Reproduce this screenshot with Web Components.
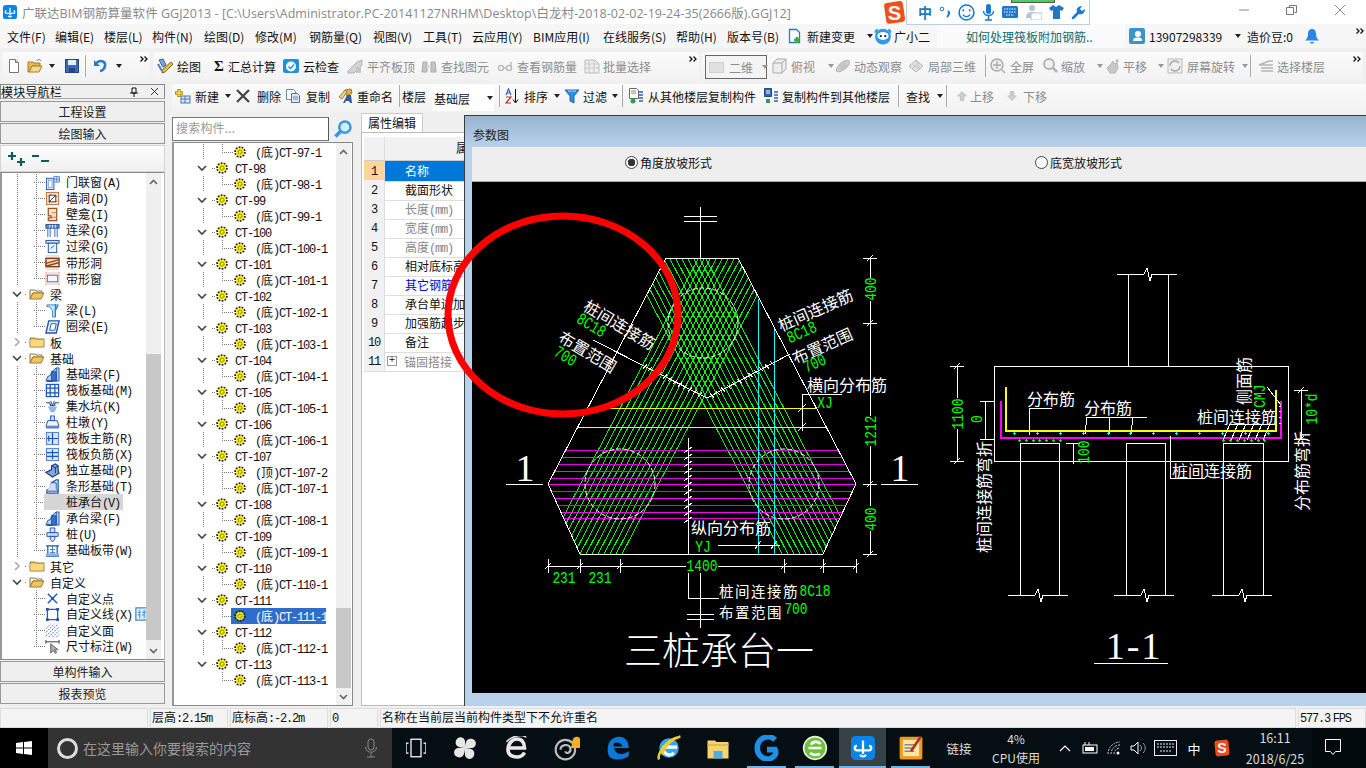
<!DOCTYPE html>
<html lang="zh">
<head>
<meta charset="utf-8">
<title>GGJ2013</title>
<style>
  html, body { margin: 0; height: 768px; overflow: hidden; background: #f0f0f0; }
  body { font: 12px "Noto Sans CJK SC", "Noto Sans", sans-serif; color: #111; }
</style>
</head>
<body>
<gd-app></gd-app>
<script>
// Shared bits -----------------------------------------------------------
const BASE = `
  *{box-sizing:border-box}
  .a{font-family:"Liberation Mono",monospace;font-size:12px;letter-spacing:-1.2px}
  svg{display:block;flex:none}
`;
// latin in the old GDI font is 6px wide next to 12px cjk
const mix = t => t.replace(/[\x21-\x7e]+/g, m => `<span class="a">${m}</span>`);
const ico = (b, s = 16) => `<svg width="${s}" height="${s}" viewBox="0 0 16 16">${b}</svg>`;

const ICONS = {
  app: `<rect x="0" y="0" width="16" height="16" rx="3" fill="#0a84e8"/><path d="M8 3v9M4 6.500c-2 0-2 3 0 3h8c2 0 2-3 0-3M6 12.500c1 1.500 3 1.500 4 0" fill="none" stroke="#fff" stroke-width="1.500"/>`,
  doc: `<path d="M3.500 1.500h6l3 3v10h-9z" fill="#fff" stroke="#777"/><path d="M9.500 1.500v3h3" fill="#ddd" stroke="#777"/>`,
  open: `<path d="M1 14V4h5l1 1h6v3H5L2 14z" fill="#e8b850" stroke="#a87c28"/><path d="M2 14l3-6h10l-3 6z" fill="#f7d98a" stroke="#a87c28"/><path d="M10 3c1-2 3-2 4 0" fill="none" stroke="#3a6ea8"/>`,
  save: `<rect x="1.500" y="1.500" width="13" height="13" fill="#3c68b8" stroke="#23427e"/><rect x="4" y="2" width="8" height="5" fill="#e8eef8"/><rect x="5" y="10" width="6" height="4" fill="#27457f"/>`,
  undo: `<path d="M3 6c3-5 10-3 9 2-.5 3-3 5-5 5" fill="none" stroke="#2f78c8" stroke-width="2.600"/><path d="M1 2v6h6z" fill="#2f78c8"/>`,
  draw: `<path d="M2 2l4-1 3 6-3 2z" fill="#7aa6d8" stroke="#34609c"/><path d="M6 11L14 4l2 2-8 8-3 1z" fill="#e8c040" stroke="#8c6a18"/><path d="M1 6l4 7" stroke="#4f7fb8" stroke-width="2"/>`,
  sigma: `<text x="8" y="13" text-anchor="middle" font-family="Liberation Serif" font-weight="700" font-size="15" fill="#111">Σ</text>`,
  cloud: `<rect x="0" y="1" width="16" height="14" rx="2" fill="#1e90e0"/><circle cx="8" cy="8.500" r="5" fill="#fff"/><path d="M5.500 8.500l2 2 3.500-4" fill="none" stroke="#1e90e0" stroke-width="1.400"/>`,
  align: `<path d="M1 13l9-9 5-2v5l-8 8H1z" fill="#d4d4d4" stroke="#b0b0b0"/><path d="M9 9h5v6H9z" fill="#c4c4c4"/>`,
  bino: `<path d="M2 4h4v10H1zM10 4h4l1 10h-5z" fill="#c4c4c4" stroke="#aaa"/><path d="M6 7h4v3H6z" fill="#ddd"/>`,
  glass: `<circle cx="4" cy="10" r="2.500" fill="none" stroke="#bdbdbd" stroke-width="1.500"/><circle cx="12" cy="10" r="2.500" fill="none" stroke="#bdbdbd" stroke-width="1.500"/><path d="M6.500 10h3M14 9V4" stroke="#bdbdbd" stroke-width="1.400"/>`,
  batch: `<path d="M1 2h10l4 4v9H1z" fill="#eee" stroke="#bbb"/><path d="M1 6h14M1 10h14M5 2v13M10 2v13" stroke="#c8c8c8"/>`,
  box: `<path d="M2 5l4-4h9v10l-4 4H2z" fill="#eee" stroke="#aaa"/><path d="M2 5h9v10M11 5l4-4" fill="none" stroke="#aaa"/>`,
  orbit: `<ellipse cx="8" cy="8" rx="8" ry="3.500" transform="rotate(-40 8 8)" fill="#d0d0d0" stroke="#b5b5b5"/><circle cx="8" cy="8" r="4" fill="#c4c4c4"/>`,
  cube3: `<path d="M1 8l7-6 7 6-7 6z" fill="#e2e2e2" stroke="#b8b8b8"/><path d="M4 5.500l7 6M8 2l4 10M4 11l7-6" stroke="#c2c2c2" fill="none"/>`,
  zoomfull: `<circle cx="7" cy="7" r="6" fill="#eee" stroke="#aaa" stroke-width="1.500"/><path d="M7 3v8M3 7h8M12 12l3 3" stroke="#aaa" stroke-width="1.300"/>`,
  zoom: `<circle cx="7" cy="6" r="5" fill="#f0f0f0" stroke="#b4b4b4" stroke-width="2"/><path d="M11 10l4 4" stroke="#b4b4b4" stroke-width="2.500"/>`,
  hand: `<path d="M2 10l4-4 2-3 1 3 3-1 1 5-3 5H5z" fill="#c8c8c8" stroke="#b4b4b4"/><path d="M12 1v4M10 3h4" stroke="#b0b0b0"/>`,
  rotate: `<rect x="1" y="1" width="14" height="14" fill="#eee" stroke="#bbb"/><path d="M3 8a5 5 0 0 1 9-3M13 8a5 5 0 0 1-9 3" fill="none" stroke="#aaa" stroke-width="1.500"/>`,
  layers: `<path d="M1 7l10-4h4M1 7h14M3 10h12M3 13h12" fill="none" stroke="#b4b4b4" stroke-width="1.500"/>`,
  newrow: `<rect x="6" y="8" width="9" height="7" fill="#dce8f6" stroke="#4c76a8"/><path d="M6 11h9M10 8v7" stroke="#4c76a8"/><path d="M4 1v8M0 5h8" stroke="#b89018" stroke-width="3.400"/><path d="M4 2v6M1 5h6" stroke="#f4d850" stroke-width="1.600"/>`,
  del: `<path d="M2 2l12 12M14 2L2 14" stroke="#444" stroke-width="2.200"/>`,
  copy: `<path d="M1.500 1.500h7l2 2v8h-9z" fill="#fff" stroke="#7088a8"/><path d="M6.500 5.500h6l2 2v7h-8z" fill="#dce8f6" stroke="#4c76a8"/><path d="M8 9h5M8 11h5" stroke="#6f8cb4"/>`,
  rename: `<path d="M8 2l6-1 1 4-5 3z" fill="#e0b040" stroke="#9c7820"/><path d="M2 9l6-7 2 2-5 7z" fill="#e8d088" stroke="#998044"/><path d="M10 7l4 0 1 8h-2l-1-2h-3l-1 2H6z" fill="#345c9c"/>`,
  sort: `<path d="M11.500 1v13" stroke="#111"/><path d="M9 11.500l2.500 3.500 2.500-3.500" fill="none" stroke="#111"/><path d="M2 7l2.500-6L7 7M3 5h3" fill="none" stroke="#2f62b4" stroke-width="1.200"/><path d="M2 9h5l-5 6h5" fill="none" stroke="#b4322c" stroke-width="1.200"/>`,
  funnel: `<path d="M1 2h14L10 8v7l-4-2V8z" fill="#2f8ce0" stroke="#1c68b0"/><path d="M4 3h8" stroke="#a8d4f8"/>`,
  cfrom: `<path d="M1.500.5h7l2 2v8h-9z" fill="#fff" stroke="#666"/><path d="M3 3h5M3 5h5" stroke="#888"/><circle cx="5" cy="13" r="2.500" fill="#2ea04a"/><path d="M11 4h4M11 7h4M11 10h4M11 13h4" stroke="#2f62b4" stroke-width="1.600"/>`,
  cto: `<path d="M1.500.5h7v8h-7z" fill="#3465b0" stroke="#234a88"/><path d="M3 3h4M3 5h4" stroke="#fff"/><path d="M3 11h4v4H3z" fill="#2ea04a"/><path d="M11 4h4M11 7h4M11 10h4M11 13h4" stroke="#2f62b4" stroke-width="1.600"/>`,
  up: `<path d="M8 3l5 5h-3v5H6V8H3z" fill="#ccc" stroke="#c0c0c0"/>`,
  down: `<path d="M8 13l5-5h-3V3H6v5H3z" fill="#ccc" stroke="#c0c0c0"/>`,
  newchange: `<path d="M2.500 1.500h7l3 3v10h-10z" fill="#fff" stroke="#2f78c8" stroke-width="1.300"/><path d="M7 12h6M10 9v6" stroke="#3aa83e" stroke-width="2.600"/>`,
  robot: `<circle cx="8" cy="8.500" r="7" fill="#2f9ae8"/><path d="M1 5L3 2M15 5l-2-3" stroke="#2f9ae8" stroke-width="2"/><ellipse cx="8" cy="8" rx="5" ry="3.500" fill="#fff"/><circle cx="6" cy="8" r="1" fill="#123"/><circle cx="10" cy="8" r="1" fill="#123"/>`,
  user: `<rect width="16" height="16" rx="2" fill="#3b94c8"/><circle cx="9" cy="6" r="3" fill="#fff"/><path d="M4 13c0-3 2-3.500 5-3.500s4 .5 4 3.500z" fill="#fff"/>`,
  bell: `<path d="M8 1c3 0 4 2.500 4 5 0 3 1 5 3 6.500H1C3 11 4 9 4 6c0-2.500 1-5 4-5z" fill="#2c84e8"/><path d="M6 14c.5 1.500 3.500 1.500 4 0" fill="#2c84e8" stroke="#2c84e8"/>`,
  magnify: `<circle cx="9.500" cy="6.500" r="4.500" fill="#d6ecfb" stroke="#3a98e0" stroke-width="2"/><path d="M6 10l-4 4" stroke="#3a98e0" stroke-width="3"/>`,
  // tree icons
  fclosed: `<path d="M1 13V4h5l1 1h8v8z" fill="#f0c040" stroke="#8a7a50"/><path d="M1.500 6h13v6.500h-13z" fill="#f8d878"/>`,
  fopen: `<path d="M1 13V4h5l1 1h6v2H4z" fill="#fff0c0" stroke="#8a7a50"/><path d="M1 13l3-6h11l-3 6z" fill="#f4c850" stroke="#8a7a50"/>`,
  gear: `<circle cx="8" cy="8" r="6.500" fill="none" stroke="#222" stroke-width="2.400" stroke-dasharray="2.400 1.600"/><circle cx="8" cy="8" r="5.200" fill="#f8f000"/><circle cx="8" cy="8" r="2.600" fill="none" stroke="#333" stroke-width="1.300" stroke-dasharray="1.500 1"/>`,
  door: `<rect x="1.500" y="3.500" width="8" height="12" fill="#eaf2fc" stroke="#2458b0"/><rect x="3.500" y="5.500" width="4" height="8" fill="#fff" stroke="#7aa0d8"/><path d="M9.500 1.500h6v6h-6zM12.500 1.500v6M9.500 4.500h6" fill="#cfe0f6" stroke="#5a88cc"/>`,
  hole: `<rect x="1.500" y="1.500" width="13" height="13" fill="#fbe7d8" stroke="#c06a30"/><path d="M1 6h14M1 11h14M6 1v5M11 6v5M5 11v4" stroke="#dd9c70"/><rect x="4.500" y="4.500" width="7" height="7" fill="#fff" stroke="#333"/><path d="M4.500 11.500l7-7" stroke="#333"/>`,
  niche: `<path d="M3.500 1.500h9v13h-9v-3h3v-2h-3z" fill="#f9dec8" stroke="#9c5220" stroke-width="1.300"/><path d="M7 6h5M7 11h5" stroke="#c08050"/>`,
  lbeam: `<rect x="1" y="1.500" width="14" height="4" fill="#5a88cc" stroke="#224f9c"/><path d="M3 5.500V15M5.500 5.500V15M10.500 5.500V15M13 5.500V15" stroke="#3468b8"/><path d="M5 2v3M8 2v3M11 2v3" stroke="#fff"/>`,
  gbeam: `<rect x="1" y="1.500" width="14" height="3" fill="#cfe0f6" stroke="#224f9c"/><rect x="3.500" y="4.500" width="9" height="10" fill="#eef4fc" stroke="#224f9c"/><path d="M6 10l4-3" stroke="#224f9c"/>`,
  bhole: `<rect x="1" y="3.500" width="14" height="9" fill="#f4dcc4" stroke="#7c3c14" stroke-width="1.500"/><path d="M1 9L15 5M1 12l14-4" stroke="#8c4a1c" stroke-width="1.500"/><path d="M1 1h14M1 15h14" stroke="#e8c0a0"/>`,
  bwin: `<rect x="1" y="1" width="14" height="14" fill="#fbe0d8"/><rect x="2.500" y="4.500" width="11" height="7" fill="#f2f6fd" stroke="#4c78c8"/><path d="M1 1v14M15 1v14" stroke="#f0b4a0" stroke-dasharray="2 1" stroke-width="1.500"/>`,
  beam: `<path d="M2 2h12l-3 6v7H8V8L5 4H2z" fill="#cfe6f8" stroke="#2f88d0"/><path d="M11 1v14M14 2l-3 6" stroke="#2f78c8" stroke-width="1.200"/>`,
  ring: `<path d="M4 2h11l-3 13H1z" fill="#e6f0fc" stroke="#1f56b0" stroke-width="1.500"/><path d="M6.500 5h5.500l-1.500 7H5z" fill="#fff" stroke="#1f56b0"/>`,
  fbeam: `<path d="M1 15l2-5 3-1 1-4 5-4h3v14z" fill="#b8d0f0" stroke="#1f56b0"/><path d="M7 5h5v10H7zM12 1v14" fill="#3c70c4" stroke="#1f56b0"/><path d="M2 15h6" stroke="#1f56b0" stroke-width="2"/>`,
  raft: `<rect x="1.500" y="1.500" width="13" height="13" fill="#eef4fc" stroke="#1f56b0" stroke-width="1.300"/><path d="M1 5.500h14M1 10.500h14M5.500 1v14M10.500 1v14" stroke="#1f56b0" stroke-width="1.300"/>`,
  sump: `<path d="M1 4l4 0 1 3h4l1-3h4" fill="none" stroke="#1f56b0" stroke-width="1.300"/><path d="M3 8h10l-3 6H6z" fill="#8cb8ec"/><path d="M6 2l2 5 2-5" fill="none" stroke="#444"/>`,
  pier: `<rect x="6" y="1" width="4" height="5" fill="#cfe0f6" stroke="#1f56b0"/><path d="M3 6h10l2 6H1z" fill="#eaf2fc" stroke="#1f56b0"/><rect x="1" y="12" width="14" height="2.500" fill="#5a88cc"/>`,
  rmain: `<rect x="1.500" y="1.500" width="13" height="13" fill="#d4e4fa" stroke="#4c78c8"/><path d="M8 2v12M2 8h12M4 5v6" stroke="#1f56b0" stroke-width="1.300"/>`,
  rneg: `<rect x="1.500" y="1.500" width="13" height="13" fill="#d4e4fa" stroke="#4c78c8"/><path d="M2 6h12M2 10h12M8 3v10" stroke="#1f56b0" stroke-width="1.300"/>`,
  iso: `<path d="M1 10l6-3V3l4-2 3 2v5l1 3-7 4z" fill="#84a8dc" stroke="#1f3f80" stroke-width="1.300"/><path d="M7 3l4 2v6M14 3l-3 2" stroke="#12306c" fill="none"/>`,
  sfound: `<path d="M2 15v-3l3-2 2-6 5-3h2v14z" fill="#fff" stroke="#1f56b0" stroke-width="1.400"/><path d="M7 4h5v6l2 3H2" fill="#cfe0f6" stroke="#1f56b0"/>`,
  cap: `<path d="M1 3h14l-1 5H2z" fill="#dbe8f8" stroke="#1f56b0" stroke-width="1.300"/><path d="M5 8h6v4l-3 3-3-3z" fill="#5a88cc" stroke="#1f56b0"/>`,
  pile: `<path d="M5.500 1h5v5h-5zM2 6h12v4H2zM5.500 10h5v3l-2.500 3-2.500-3z" fill="#cfe0f6" stroke="#1f56b0"/>`,
  band: `<path d="M1 3h14M1 14h14M3 3v11M13 3v11" stroke="#1f56b0" stroke-width="1.300"/><path d="M8 3v11M5 7h6M5 10h6" stroke="#3a78c8"/><rect x="1" y="11" width="14" height="3" fill="#8cb0e6"/>`,
  point: `<path d="M3 3l10 10M13 3L3 13" stroke="#2456b8" stroke-width="1.500"/><circle cx="8" cy="8" r="1.500" fill="#2456b8"/>`,
  lineo: `<rect x="2.500" y="2.500" width="11" height="11" fill="none" stroke="#1f56b0" stroke-width="1.300"/><path d="M1 1h3v3H1zM12 1h3v3h-3zM1 12h3v3H1zM12 12h3v3h-3z" fill="#1f56b0"/>`,
  surf: `<path d="M1 6l5-5M1 10l9-9M1 14L14 1M4 15L15 4M8 15l7-7M12 15l3-3" stroke="#3a78d8" stroke-dasharray="2 1"/>`,
  dim: `<path d="M1 3h14M1 1v4M15 1v4" stroke="#333"/><path d="M6 5v10l3-2.500 2 3 1.500-1-2-3h3.500z" fill="#aaa" stroke="#666"/>`,
  lpanel: `<rect x="1" y="1" width="14" height="14" fill="#e4f2fd" stroke="#2a80d0" stroke-width="1.300"/><path d="M5.500 3v10M10.500 3v10M3 6h3M3 9h3M8 6h3M8 9h3M13 6h-2" stroke="#2a80d0"/>`
};

function shadow(el, css, html) {
  const r = el.attachShadow({ mode: 'open' });
  const tpl = document.createElement('template');
  tpl.innerHTML = `<style>${BASE}${css}</style>${html}`;
  r.appendChild(tpl.content.cloneNode(true));
  return r;
}

// Toolbar bits -----------------------------------------------------------
class ToolStrip extends HTMLElement {
  constructor() {
    super();
    shadow(this, `:host{display:flex;align-items:center;height:28px;background:linear-gradient(#fbfbfb,#f1f1f1);border-radius:3px;flex:none;padding-bottom:2px}`, `<slot></slot>`);
  }
}
class TbItem extends HTMLElement {
  connectedCallback() {
    if (this.shadowRoot) return;
    const icon = this.getAttribute('icon');
    const gap = this.getAttribute('gap') || 4;
    shadow(this, `
      :host{display:flex;align-items:center;height:100%;flex:none;white-space:nowrap;gap:${gap}px;font-size:12px}
      :host([off]){color:#8d8d8d}
      i{width:0;height:0;border:3px solid transparent;border-top:4px solid #222;border-bottom:0;margin-left:${this.getAttribute('am') || 5}px}
      :host([off]) i{border-top-color:#999}
    `, `${icon ? ico(ICONS[icon], +this.getAttribute('size') || 16) : ''}<slot></slot>${this.hasAttribute('arrow') ? '<i></i>' : ''}`);
    this.style.width = this.getAttribute('w') + 'px';
  }
}
class TbSep extends HTMLElement {
  connectedCallback() {
    if (this.shadowRoot) return;
    shadow(this, `:host{display:block;flex:none;height:22px;border-left:1px solid #aaa}`, ``);
    this.style.width = this.getAttribute('w') + 'px';
  }
}
class TbMore extends HTMLElement {
  constructor() {
    super();
    shadow(this, `:host{display:block;margin-left:auto;align-self:flex-start;padding:4px 2px 0 0}`,
      `<svg width="8" height="6" viewBox="0 0 8 6"><path d="M.5.500L3 3 .5 5.500M4.500.500L7 3 4.500 5.500" fill="none" stroke="#111" stroke-width="1.300"/></svg>`);
  }
}

// Window chrome -----------------------------------------------------------
class TitleBar extends HTMLElement {
  constructor() {
    super();
    shadow(this, `
      :host{display:flex;align-items:center;height:24px;background:#fff;color:#888;padding-left:3px;font:12.500px "Open Sans","Noto Sans CJK SC",sans-serif;white-space:nowrap}
      span{margin-left:5px;letter-spacing:.03px}
      .ctl{margin-left:auto;display:flex;align-self:flex-start;padding-top:3px}
      .ctl svg{margin-left:34px}
    `, `${ico(ICONS.app, 14)}<span>广联达BIM钢筋算量软件 GGJ2013 - [C:\\Users\\Administrator.PC-20141127NRHM\\Desktop\\白龙村-2018-02-02-19-24-35(2666版).GGJ12]</span>
    <div class="ctl">
      <svg width="14" height="14" viewBox="0 0 14 14"><path d="M2 7h10" stroke="#888"/></svg>
      <svg width="14" height="14" viewBox="0 0 14 14"><path d="M1.500 4.500h7v7h-7zM4.500 4.500v-2h7v7h-2" fill="none" stroke="#777"/></svg>
      <svg width="14" height="14" viewBox="0 0 14 14" style="margin-right:19px"><path d="M2 2l10 10M12 2L2 12" stroke="#888"/></svg>
    </div>`);
  }
}
class ImeBar extends HTMLElement {
  constructor() {
    super();
    const c = '#1c78c8';
    shadow(this, `
      :host{position:absolute;left:884px;top:0;display:flex;align-items:flex-start;height:27px}
      .bar{display:flex;align-items:center;gap:7px;height:25px;width:184px;background:#fff;border:1px solid #b8cfe0;border-top:0;padding-left:11px;color:${c};font:bold 14px "Noto Sans CJK SC",sans-serif}
      .g{position:absolute;left:127px;top:0;width:44px;height:3px;background:#4ccf60;border:1px solid #555;border-top:0}
    `, `<svg width="22" height="26" viewBox="0 0 22 26"><rect x="1" y="2" width="19" height="21" rx="3" transform="rotate(-8 10 12)" fill="#f0501c"/><text x="10.500" y="20" text-anchor="middle" font-family="Liberation Sans" font-weight="700" font-size="20" fill="#fff">S</text></svg>
    <div class="bar"><span>中</span>
      <svg width="12" height="14" viewBox="0 0 12 14"><circle cx="3" cy="4" r="1.800" fill="none" stroke="${c}"/><path d="M9 6c2 2 1 4-1 6" stroke="${c}" stroke-width="2" fill="none"/></svg>
      <svg width="17" height="17" viewBox="0 0 16 16"><circle cx="8" cy="8" r="7" fill="none" stroke="${c}" stroke-width="1.500"/><path d="M5 5v2M11 5v2" stroke="${c}" stroke-width="1.500"/><path d="M4.500 10c2 2.500 5 2.500 7 0" fill="none" stroke="${c}" stroke-width="1.300"/></svg>
      <svg width="13" height="17" viewBox="0 0 13 17"><rect x="4" y="0" width="5" height="10" rx="2.500" fill="${c}"/><path d="M1.500 7c0 6 10 6 10 0M6.500 12v4M3 16h7" fill="none" stroke="${c}" stroke-width="1.500"/></svg>
      <svg width="16" height="12" viewBox="0 0 16 12"><rect width="16" height="12" rx="1.500" fill="${c}"/><path d="M2 3h12M2 6h12M4 9h8" stroke="#fff" stroke-dasharray="1.500 1"/></svg>
      <svg width="17" height="16" viewBox="0 0 17 16"><circle cx="7" cy="4" r="3" fill="#b0c4d8"/><path d="M1 14c0-5 3-6 6-6s5 1 5 3v3z" fill="#b0c4d8"/><rect x="6" y="9" width="11" height="7" fill="#fff" stroke="#b0c4d8"/></svg>
      <svg width="15" height="14" viewBox="0 0 15 14"><path d="M4 0l3 2 3-2 5 3-2 3-2-1v9H4V5L2 6 0 3z" fill="${c}"/></svg>
      <svg width="15" height="15" viewBox="0 0 15 15"><path d="M1 14c-1-1 0-2 5-7-1-3 1-6 5-6l-2 3 2 2 3-2c0 4-3 6-6 5-5 5-6 6-7 5z" fill="${c}"/></svg>
    </div><div class="g"></div>`);
  }
}
class MenuBar extends HTMLElement {
  constructor() {
    super();
    shadow(this, `
      :host{display:flex;height:24px;align-items:stretch;flex:none}
      .l{display:flex;align-items:center;background:#f6f6f6;padding-left:7px;width:937px;font-size:12px}
      .m{flex:none;white-space:nowrap}
      .tip{width:188px;flex:none;padding-left:29px;background:#fbfbfb;color:#0b6a6a;display:flex;align-items:center;white-space:nowrap}
      .r{flex:1;background:#f6f6f6;display:flex;align-items:center;padding-left:4px;position:relative;border-radius:3px}
    `, `<div class="l">${[['文件(F)',48],['编辑(E)',49],['楼层(L)',48],['构件(N)',52],['绘图(D)',51],['修改(M)',54],['钢筋量(Q)',64],['视图(V)',50],['工具(T)',49],['云应用(Y)',61],['BIM应用(I)',70],['在线服务(S)',73],['帮助(H)',51],['版本号(B)',60]].map(([t, w]) => `<span class="m" style="width:${w}px">${t}</span>`).join('')}
      <tb-item icon="newchange" w="87" arrow am="8">新建变更</tb-item>
      <tb-item icon="robot" w="60" gap="2" size="18">广小二</tb-item>
    </div>
    <div class="tip">如何处理筏板附加钢筋..</div>
    <div class="r"><tb-item icon="user" w="118" arrow am="9">13907298339</tb-item><tb-item w="57">造价豆:0</tb-item>${ico(ICONS.bell)}<tb-more></tb-more></div>`);
  }
}
class MainToolbar extends HTMLElement {
  constructor() {
    super();
    shadow(this, `
      :host{display:flex;flex:none;height:30px;margin-top:4px;padding:0 3px 0 2px;gap:3px}
      tool-strip{height:30px}
      .combo{flex:none;width:62px;height:24px;margin:2px 4px 0 3px;border:1px solid #666;background:#f4f4f4;display:flex;align-items:center;gap:5px;padding-left:3px;color:#8d8d8d;white-space:nowrap}
      .combo b{width:15px;height:11px;background:#e0e0e0;border:1px solid #cfcfcf;flex:none}
      .combo i{width:0;height:0;border:3px solid transparent;border-top:4px solid #999;border-bottom:0;margin-left:4px;flex:none}
    `, `<tool-strip style="width:148px;padding-left:4px">
      <tb-item icon="doc" w="21"></tb-item><tb-item icon="open" w="37" arrow am="2"></tb-item><tb-item icon="save" w="21"></tb-item><tb-sep w="8"></tb-sep><tb-item icon="undo" w="28" arrow am="4" gap="3"></tb-item><tb-more></tb-more>
    </tool-strip>
    <tool-strip style="width:546px;padding-left:4px">
      <tb-item icon="draw" w="54">绘图</tb-item><tb-item icon="sigma" w="72" gap="1">汇总计算</tb-item><tb-item icon="cloud" w="64">云检查</tb-item>
      <tb-item icon="align" w="74" off>平齐板顶</tb-item><tb-item icon="bino" w="76" off>查找图元</tb-item><tb-item icon="glass" w="87" off>查看钢筋量</tb-item><tb-item icon="batch" w="70" off gap="3">批量选择</tb-item><tb-more></tb-more>
    </tool-strip>
    <tool-strip style="flex:1">
      <div class="combo"><b></b>二维<i></i></div>
      <tb-item icon="box" w="64" off arrow am="9">俯视</tb-item><tb-item icon="orbit" w="73" off gap="3">动态观察</tb-item><tb-item icon="cube3" w="77" off>局部三维</tb-item><tb-sep w="5"></tb-sep>
      <tb-item icon="zoomfull" w="52" off>全屏</tb-item><tb-item icon="zoom" w="63" off gap="3" arrow am="9">缩放</tb-item><tb-item icon="hand" w="62" off gap="2" arrow am="9">平移</tb-item><tb-item icon="rotate" w="83" off arrow am="3">屏幕旋转</tb-item><tb-sep w="8"></tb-sep><tb-item icon="layers" w="90" off gap="3">选择楼层</tb-item><tb-more></tb-more>
    </tool-strip>`);
  }
}
class ListToolbar extends HTMLElement {
  constructor() {
    super();
    shadow(this, `
      :host{display:block;flex:none;height:28px}
      tool-strip{padding-left:3px;width:100%;padding-bottom:4px}
      .combo{flex:none;width:62px;height:26px;margin-top:4px;background:#fff;display:flex;align-items:center;padding-left:2px;margin-right:5px;white-space:nowrap}
      .combo i{width:0;height:0;border:3px solid transparent;border-top:4px solid #222;border-bottom:0;margin-left:17px}
    `, `<tool-strip>
      <tb-item icon="newrow" w="60" arrow am="2">新建</tb-item><tb-item icon="del" w="50" gap="6">删除</tb-item><tb-item icon="copy" w="52" gap="5">复制</tb-item><tb-item icon="rename" w="62">重命名</tb-item>
      <tb-sep w="3"></tb-sep><tb-item w="30">楼层</tb-item><div class="combo">基础层<i></i></div><tb-sep w="5"></tb-sep>
      <tb-item icon="sort" w="60" arrow am="2">排序</tb-item><tb-item icon="funnel" w="58" gap="3" arrow am="2">过滤</tb-item><tb-sep w="6"></tb-sep>
      <tb-item icon="cfrom" w="135">从其他楼层复制构件</tb-item><tb-item icon="cto" w="135" gap="3">复制构件到其他楼层</tb-item><tb-sep w="8"></tb-sep>
      <tb-item w="40" arrow am="3">查找</tb-item><tb-sep w="9"></tb-sep>
      <tb-item icon="up" w="50" off gap="1" size="14">上移</tb-item><tb-item icon="down" w="50" off gap="4" size="14">下移</tb-item>
    </tool-strip>`);
  }
}

// Scrollbar used by both trees ---------------------------------------------
class ScrollRail extends HTMLElement {
  constructor() {
    super();
    shadow(this, `
      :host{display:flex;flex-direction:column;width:15px;flex:none;background:#f0f0f0}
      .b{height:17px;flex:none;display:flex;align-items:center;justify-content:center}
      .sp{flex:none}
      .t{background:#c8c8c8;flex:none}
      .e{flex:1}
    `, `<div class="b"><svg width="9" height="6" viewBox="0 0 9 6"><path d="M1 5l3.500-3.500L8 5" fill="none" stroke="#666" stroke-width="1.600"/></svg></div>
    <div class="sp" style="height:${this.getAttribute('before')}px"></div><div class="t" style="height:${this.getAttribute('thumb')}px"></div><div class="e"></div>
    <div class="b"><svg width="9" height="6" viewBox="0 0 9 6"><path d="M1 1l3.500 3.500L8 1" fill="none" stroke="#666" stroke-width="1.600"/></svg></div>`);
  }
}

// Left module navigator -----------------------------------------------------
const NAV_ROWS = [
  ['c', 'door', '门联窗(A)', 'v'], ['c', 'hole', '墙洞(D)', 'v'], ['c', 'niche', '壁龛(I)', 'v'], ['c', 'lbeam', '连梁(G)', 'v'], ['c', 'gbeam', '过梁(G)', 'v'], ['c', 'bhole', '带形洞', 'v'], ['c', 'bwin', '带形窗', 'l'],
  ['g', 'fopen', '梁', 'o'], ['c', 'beam', '梁(L)', 'v'], ['c', 'ring', '圈梁(E)', 'l'],
  ['g', 'fclosed', '板', 'x'],
  ['g', 'fopen', '基础', 'o'], ['c', 'fbeam', '基础梁(F)', 'v'], ['c', 'raft', '筏板基础(M)', 'v'], ['c', 'sump', '集水坑(K)', 'v'], ['c', 'pier', '柱墩(Y)', 'v'], ['c', 'rmain', '筏板主筋(R)', 'v'], ['c', 'rneg', '筏板负筋(X)', 'v'], ['c', 'iso', '独立基础(P)', 'v'], ['c', 'sfound', '条形基础(T)', 'v'], ['c', 'cap', '桩承台(V)', 'v', 'sel'], ['c', 'fbeam', '承台梁(F)', 'v'], ['c', 'pile', '桩(U)', 'v'], ['c', 'band', '基础板带(W)', 'l'],
  ['g', 'fclosed', '其它', 'x'],
  ['g', 'fopen', '自定义', 'o', 'end'], ['c', 'point', '自定义点', 'v', 'end'], ['c', 'lineo', '自定义线(X)', 'v', 'end', 'lpanel'], ['c', 'surf', '自定义面', 'v', 'end'], ['c', 'dim', '尺寸标注(W)', 'l', 'end']
];
const DOT_V = 'repeating-linear-gradient(#777 0 1px,transparent 1px 2px)';
const DOT_H = 'repeating-linear-gradient(90deg,#777 0 1px,transparent 1px 2px)';
function navRow([kind, icon, text, link, flag, extra]) {
  const chev = link === 'o'
    ? '<path d="M1 2l4 4 4-4" fill="none" stroke="#444" stroke-width="1.600"/>'
    : '<path d="M3 0l4 4-4 4" fill="none" stroke="#aaa" stroke-width="1.600"/>';
  if (kind === 'g') {
    return `<div class="row g">
      <svg class="chev" width="10" height="8" viewBox="0 0 10 8">${chev}</svg><span class="dh"></span>${ico(ICONS[icon])}<span class="tx">${mix(text)}</span></div>`;
  }
  const bg = [];
  if (flag !== 'end') bg.push(`${DOT_V} 15px 0/1px 100% no-repeat`);
  bg.push(`${DOT_V} 34px 0/1px ${link === 'l' ? '8px' : '100%'} no-repeat`);
  return `<div class="row c" style="background:${bg.join(',')}"><span class="dc"></span>${ico(ICONS[icon], 15)}<span class="tx ${flag === 'sel' ? 'sel' : ''}">${mix(text)}</span>${extra ? ico(ICONS[extra], 14) : ''}</div>`;
}
class NavPanel extends HTMLElement {
  constructor() {
    super();
    shadow(this, `
      :host{display:flex;flex-direction:column;width:165px;flex:none;padding-bottom:2px}
      .head{height:15px;flex:none;display:flex;align-items:center;border:1px solid #888;border-bottom-color:#aaa;background:#f0f0f0;font-size:12px;line-height:13px;padding-right:5px}
      .head span{flex:1;letter-spacing:.2px}
      .btn{height:21px;flex:none;margin-top:1px;border:1px solid #999;background:#efefef;display:flex;align-items:center;justify-content:center;font-size:12px;color:#222}
      .btn.first{margin-top:2px}
      .tools{height:27px;flex:none;display:flex;align-items:center;gap:5px;padding-left:6px;border:1px solid #d5d5d5;background:linear-gradient(#fdfdfd,#f0f0f0);margin-top:1px}
      .box{flex:1;min-height:0;display:flex;border:1px solid #888;border-right-color:#bbb;background:#fff;border-left:2px solid #999;padding-right:3px;overflow:hidden}
      .list{flex:1;min-width:0;overflow:hidden;margin-top:1px;white-space:nowrap}
      .row{height:16px;display:flex;align-items:center;font-size:12px}
      .g{padding-left:10px}
      .chev{margin-right:3px;flex:none}
      .dh{width:2px;height:1px;background:${DOT_H};margin-right:2px;flex:none}
      .g svg:nth-of-type(2){margin-right:5px}
      .c{padding-left:32px}
      .dc{width:11px;height:1px;background:${DOT_H};flex:none}
      .c .tx{margin-left:5px;padding:0 3px 0 1px}
      .tx.sel{background:#d6d6d6;box-shadow:-21px 0 0 #d6d6d6;height:16px;line-height:16px;width:58px}
    `, `<div class="head"><span>模块导航栏</span>
        <svg width="10" height="10" viewBox="0 0 10 10" style="margin-right:11px"><path d="M3 1h4v5H3zM1 6h8M5 6v4" fill="none" stroke="#111"/></svg>
        <svg width="9" height="9" viewBox="0 0 9 9"><path d="M1 1l7 7M8 1L1 8" stroke="#333"/></svg></div>
      <div class="btn first">工程设置</div><div class="btn">绘图输入</div>
      <div class="tools"><svg width="20" height="16" viewBox="0 0 20 16"><path d="M5 1v8M1 5h8" stroke="#0c5c5c" stroke-width="2.200"/><path d="M14 7v8M10 11h8" stroke="#0c5c5c" stroke-width="2.200"/></svg>
        <svg width="18" height="14" viewBox="0 0 18 14"><path d="M0 4h7M9 9h8" stroke="#0c5c5c" stroke-width="2.200"/></svg></div>
      <div class="box"><div class="list">${NAV_ROWS.map(navRow).join('')}</div><scroll-rail before="164" thumb="286"></scroll-rail></div>
      <div class="btn">单构件输入</div><div class="btn">报表预览</div>`);
  }
}

// Component list ------------------------------------------------------------
class CompTree extends HTMLElement {
  constructor() {
    super();
    const rows = [['c', '(底)CT-97-1']];
    for (let n = 98; n <= 113; n++) {
      rows.push(['g', `CT-${n}`]);
      if (n === 107) rows.push(['c', '(顶)CT-107-2', 'v']);
      rows.push(['c', `(底)CT-${n}-1`]);
    }
    const gear = ico(ICONS.gear, 12);
    const html = rows.map(([k, t, v]) => {
      const guides = [];
      if (k === 'c') {
        if (t !== '(底)CT-113-1') guides.push(`${DOT_V} 29px 0/1px 100% no-repeat`);
        guides.push(`${DOT_V} 48px 0/1px ${v ? '100%' : '8px'} no-repeat`);
        const sel = t === '(底)CT-111-1';
        return `<div class="row c" style="background:${guides.join(',')}"><span class="dc"></span>${gear}<span class="tx ${sel ? 'sel' : ''}">${mix(t)}</span></div>`;
      }
      return `<div class="row g"><svg width="10" height="8" viewBox="0 0 10 8"><path d="M1 2l4 4 4-4" fill="none" stroke="#444" stroke-width="1.600"/></svg><span class="dh"></span>${gear}<span class="tx">${mix(t)}</span></div>`;
    }).join('');
    shadow(this, `
      :host{display:flex;flex-direction:column;width:181px;flex:none}
      .search{height:24px;flex:none;display:flex;align-items:center;margin-top:2px}
      .search div{width:157px;height:24px;border:1px solid #777;border-right-color:#555;background:#fff;padding-left:3px;color:#999;line-height:20px;font-size:12px;letter-spacing:.2px}
      .search svg{margin-left:4px}
      .box{flex:1;min-height:0;display:flex;border:1px solid #888;border-left:2px solid #999;background:#fff;margin-top:1px;padding-right:1px;overflow:hidden}
      .list{flex:1;min-width:0;overflow:hidden;margin-top:1px;white-space:nowrap}
      .row{height:16px;display:flex;align-items:center;font-size:12px}
      .g{padding-left:23px}
      .dh{width:3px;height:1px;background:${DOT_H};margin:0 1px 0 5px}
      .g .tx{margin-left:7px}
      .c{padding-left:48px}
      .dc{width:11px;height:1px;background:${DOT_H};flex:none}
      .c svg{margin-left:1px;position:relative;z-index:1}
      .c .tx{margin-left:9px}
      .tx.sel{background:#2f6dcc;color:#fff;box-shadow:-24px 0 0 #2f6dcc;width:71px;height:16px;line-height:16px}
    `, `<div class="search"><div>搜索构件...</div>${ico(ICONS.magnify, 20)}</div>
      <div class="box"><div class="list">${html}</div><scroll-rail before="448" thumb="80"></scroll-rail></div>`);
  }
}

// Property sheet, mostly hidden behind the dialog ------------------------------
class PropSheet extends HTMLElement {
  constructor() {
    super();
    const rows = [['名称', 'sel'], ['截面形状', ''], ['长度(mm)', 'gr'], ['宽度(mm)', 'gr'], ['高度(mm)', 'gr'], ['相对底标高(m)', ''], ['其它钢筋', 'bl'], ['承台单边加强筋', ''], ['加强筋起步(mm)', ''], ['备注', ''], ['锚固搭接', 'gr', 1]];
    shadow(this, `
      :host{display:flex;flex-direction:column;flex:1;min-width:0;margin-left:8px}
      .tab{height:19px;width:62px;flex:none;background:#fff;border:1px solid #ccc;border-bottom:0;display:flex;align-items:center;justify-content:center;font-size:12px;margin-top:-2px;padding-bottom:2px}
      .body{flex:1;min-height:0;background:#fff;border:1px solid #bbb;padding:4px 0 0 2px}
      .head,.r{display:grid;grid-template-columns:21px 190px;font-size:12px}
      .head{height:24px}
      .head b{font-weight:400;background:#f1f1f1;border-right:1px solid #ddd;border-bottom:1px solid #ccc;display:flex;align-items:center;justify-content:center;padding-bottom:2px}
      .head b:last-child{justify-content:flex-start;padding-left:71px}
      .r{height:19px}
      .n{background:#f1f1f1;border:1px solid #ddd;border-width:0 1px 1px 0;text-align:center;line-height:18px}
      .t{border-bottom:1px solid #ddd;padding-left:20px;line-height:19px;white-space:nowrap;overflow:hidden}
      .sel .n{background:#fdd49a}
      .sel .t{background:#0078d7;color:#fff}
      .gr .t{color:#888}
      .bl .t{color:#0000e6}
      .t.p{padding-left:2px;display:flex;align-items:center;gap:7px}
      .t.p i{width:10px;height:10px;border:1px solid #999;font:10px/8px "Liberation Mono";color:#333;text-align:center}
    `, `<div class="tab">属性编辑</div>
      <div class="body"><div class="head"><b></b><b>属</b></div>
      ${rows.map(([t, c, p], i) => `<div class="r ${c}"><div class="n"><span class="a">${i + 1}</span></div><div class="t ${p ? 'p' : ''}">${p ? '<i>+</i>' : ''}<span>${mix(t)}</span></div></div>`).join('')}
      </div>`);
  }
}

// The parameter drawing: free canvas, in screen coordinates ----------------
const W = '#fff', G = '#00ff00';
const ln = (x1, y1, x2, y2, c = W, w = 1) => `<line x1="${x1}" y1="${y1}" x2="${x2}" y2="${y2}" stroke="${c}" stroke-width="${w}"/>`;
const cn = (s, x, y, o = {}) => `<text x="${x}" y="${y}" text-anchor="middle" dominant-baseline="central" font-size="${o.size || 16}" fill="${o.c || W}"${o.ls ? ` letter-spacing="${o.ls}"` : ''}${o.w ? ` font-weight="${o.w}"` : ''}${o.rot != null ? ` transform="rotate(${o.rot} ${x} ${y})"` : ''}>${s}</text>`;
// tall, narrow digits like the shx font
const gn = (s, x, y, o = {}) => `<text x="${x}" y="${y}" text-anchor="middle" dominant-baseline="central" font-family="Liberation Mono" font-size="17" fill="${o.c || G}" textLength="${s.length * (o.cw || 7.75)}" lengthAdjust="spacingAndGlyphs"${o.rot != null ? ` transform="rotate(${o.rot} ${x} ${y})"` : ''}>${s}</text>`;
const hTick = (x, y) => ln(x - 7, y, x + 7, y) + ln(x - 3, y + 3, x + 3, y - 3);
const vTick = (x, y) => ln(x, y - 7, x, y + 7) + ln(x - 3, y + 3, x + 3, y - 3);
const brk = (x1, x2, y) => { const m = (x1 + x2) / 2; return `<path d="M${x1} ${y}H${m - 3}l3-6 3 13 2-7H${x2}" fill="none" stroke="#fff"/>`; };

class CadDrawing extends HTMLElement {
  constructor() {
    super();
    let s = '';
    // hatch bands of the plan
    let h = '';
    for (let x = 544; x <= 623; x += 6) {
      h += ln(x, 553, x + 154.5, 257, G);
      h += ln(1404 - x, 553, 1404 - x - 154.5, 257, G);
    }
    [449, 456, 463, 470, 477, 483, 490, 497, 504, 511, 517].forEach((y, i) => { h += ln(540, y, 865, y, i % 2 ? '#ff00ff' : '#e000e0'); });
    h += ln(580, 407, 825, 407, '#ffff00') + ln(570, 426, 835, 426, '#ffff00');
    s += `<clipPath id="hx"><polygon points="666,257 738,257 856,483 823,553 580,553 548,483"/></clipPath><g clip-path="url(#hx)">${h}</g>`;
    s += ln(758, 298, 758, 553, '#00ffff') + ln(774, 328, 774, 553, '#00ffff');
    s += `<polygon points="666,257 738,257 856,483 823,553 580,553 548,483" fill="none" stroke="#fff"/>`;
    [[703, 322], [620, 483], [784, 483]].forEach(([x, y]) => { s += `<circle cx="${x}" cy="${y}" r="35" fill="none" stroke="#fff" stroke-dasharray="5 2"/>`; });
    // top leader
    s += ln(700, 206, 700, 257) + ln(684, 215, 717, 215) + ln(684, 220, 717, 220);
    // dotted chevron over the piles
    s += ln(593, 339, 707, 397) + ln(707, 397, 790, 353);
    for (let i = 0; i < 12; i++) { const x = 645 + i * 5, y = 365.500 + (i * 5) * .509; s += ln(x - 2, y + 2, x + 2, y - 2); }
    for (let i = 0; i < 12; i++) { const x = 712 + i * 5.500, y = 394.500 - (i * 5.500) * .53; s += ln(x - 2, y - 2, x + 2, y + 2); }
    // rotated notes
    s += cn('桩间连接筋', 620, 323, { rot: 31 }) + gn('8C18', 591, 325, { rot: 31 }) + cn('布置范围', 588, 350, { rot: 31 }) + gn('700', 565, 356, { rot: 31 });
    s += cn('桩间连接筋', 815, 308, { rot: -24 }) + gn('8C18', 802, 332, { rot: -24 }) + cn('布置范围', 822, 344, { rot: -24 }) + gn('700', 815, 363, { rot: -24 });
    // XJ
    s += cn('横向分布筋', 847, 383) + ln(802, 393, 842, 393) + ln(802, 393, 802, 430) + gn('XJ', 825, 402) + ln(798, 411, 806, 403) + ln(798, 430, 806, 422);
    // right dimension line
    s += ln(870, 257, 870, 277) + ln(870, 300, 870, 415) + ln(870, 445, 870, 505) + ln(870, 530, 870, 553);
    [257, 322, 483, 553].forEach(y => { s += hTick(870, y); });
    s += gn('400', 871, 288, { rot: -90 }) + gn('1212', 871, 430, { rot: -90 }) + gn('400', 871, 518, { rot: -90 });
    // section marks
    s += `<text x="525" y="467" text-anchor="middle" dominant-baseline="central" font-family="Liberation Serif" font-size="38" fill="#fff">1</text>` + ln(506, 483, 543, 483);
    s += `<text x="900" y="467" text-anchor="middle" dominant-baseline="central" font-family="Liberation Serif" font-size="38" fill="#fff">1</text>` + ln(881, 483, 918, 483);
    // longitudinal bars
    s += ln(688, 437, 688, 553);
    for (let y = 449; y <= 520; y += 7) s += ln(684, y + 3, 692, y - 3);
    s += cn('纵向分布筋', 731, 526) + gn('YJ', 703, 546) + ln(718, 544, 780, 544) + ln(755, 548, 761, 540) + ln(771, 548, 777, 540);
    // bottom dimension
    s += ln(548, 565, 686, 565) + ln(718, 565, 856, 565);
    [548, 580, 620, 784, 823, 856].forEach(x => { s += vTick(x, 565); });
    s += gn('1400', 702, 565) + gn('231', 564, 577) + gn('231', 600, 577);
    // note under the plan
    s += ln(688, 572, 688, 597) + ln(688, 597, 719, 597) + ln(700, 572, 700, 627) + ln(687, 613, 714, 613) + ln(687, 618, 714, 618);
    s += cn('桩间连接筋', 759, 589, { size: 14.500, ls: 1.500 }) + gn('8C18', 815, 590) + cn('布置范围', 751, 610, { size: 14.500, ls: 1.500 }) + gn('700', 796, 608);
    s += cn('三桩承台一', 719, 646, { size: 38, w: 200 });

    // section 1-1
    s += brk(1117, 1177, 273) + ln(1128, 273, 1128, 365) + ln(1168, 273, 1168, 365);
    s += `<rect x="994.500" y="365.500" width="294" height="95" fill="none" stroke="#fff"/>`;
    [[1020, 1059, 1008, 1068], [1126, 1165, 1114, 1174], [1223, 1263, 1212, 1272]].forEach(([a, b, c, d]) => {
      s += ln(a, 442, b, 442) + ln(a, 442, a, 594) + ln(b, 442, b, 594) + brk(c, d, 594);
    });
    s += `<path d="M1006 386V430H1276V389" fill="none" stroke="#ffff00" stroke-width="2"/>`;
    s += `<path d="M1001 400V437H1281V400" fill="none" stroke="#ff00ff" stroke-width="2"/>`;
    [253, 322, 391, 460, 533, 601, 670, 739, 808, 877, 946, 1015].forEach(z => { const x = 930 + Math.round(z / 3); s += ln(x - 1, 432, x + 2, 432, '#00ffff') + ln(x, 431, x, 434, '#00ffff'); });
    [268, 289, 310, 327, 349, 370, 391, 878, 899, 920, 941, 962, 983, 1003].forEach(z => { const x = 930 + Math.round(z / 3); s += ln(x - 1, 439, x + 2, 439, G) + ln(x, 438, x, 441, G); });
    s += cn('分布筋', 1051, 397) + ln(1029, 407, 1052, 407) + ln(1029, 407, 1029, 434);
    s += cn('分布筋', 1108, 406) + ln(1087, 416, 1147, 416) + ln(1087, 416, 1085, 433) + ln(1110, 416, 1109, 433) + ln(1133, 416, 1131, 433);
    s += cn('桩间连接筋', 1237, 415) + ln(1230, 423, 1273, 423);
    for (let i = 0; i < 6; i++) s += ln(1230 + i * 8, 423, 1223 + i * 8, 439);
    s += cn('桩间连接筋', 1212, 469) + `<path d="M1170 435V477H1205" fill="none" stroke="#fff"/>`;
    s += ln(957, 365, 957, 397) + ln(957, 428, 957, 460) + hTick(957, 365) + hTick(957, 460) + gn('1100', 958, 413, { rot: -90 });
    s += ln(985, 400, 985, 438) + ln(980, 400, 994, 400) + ln(980, 438, 994, 438) + gn('0', 977, 418, { rot: -90 });
    s += cn('桩间连接筋弯折', 983, 496, { rot: -90 });
    s += ln(1073, 442, 1073, 463) + ln(1066, 442, 1080, 442) + gn('100', 1084, 451, { rot: -90 });
    s += cn('侧面筋', 1243, 380, { rot: -90 }) + gn('CMJ', 1260, 395, { rot: -90 }) + ln(1267, 386, 1281, 404);
    [405, 410, 416, 422].forEach(y => { s += ln(1279, y, 1281, y + 1); });
    s += ln(1301, 389, 1301, 438) + hTick(1301, 389) + hTick(1301, 438) + gn('10*d', 1312, 408, { rot: -90 });
    s += cn('分布筋弯折', 1301, 470, { rot: -90 });
    s += `<text x="1134" y="645" text-anchor="middle" dominant-baseline="central" font-family="Liberation Serif" font-size="38" letter-spacing="2" fill="#fff">1-1</text>` + ln(1094, 662, 1168, 662);

    shadow(this, `
      :host{display:block;flex:none;height:511px;background:#000;overflow:hidden}
      svg{width:894px;height:511px;font-family:"Noto Sans CJK SC",sans-serif}
      line,path,rect,polygon{shape-rendering:crispEdges}
    `, `<svg viewBox="472 181 894 511">${s}</svg>`);
  }
}
class ParamDialog extends HTMLElement {
  constructor() {
    super();
    shadow(this, `
      :host{position:absolute;left:464px;top:115px;width:902px;height:591px;display:flex;flex-direction:column;border:1px solid #3c3c3c;border-right:0;border-bottom:0;padding:0 0 13px 7px;background:linear-gradient(#9ab4d0 0,#b8d2ec 32px,#b8d2ec 100%)}
      .cap{height:31px;flex:none;padding-top:12px;margin-left:1px;font-size:12px;color:#222;line-height:14px}
      .opt{height:35px;flex:none;background:#eee;border-bottom:1px solid #aaa;display:flex;font-size:12px;color:#111;padding-bottom:4px}
      .opt label{display:flex;align-items:center;gap:2px}
      .opt label:first-child{margin-left:153px;width:410px}
      i{width:13px;height:13px;border:1px solid #444;border-radius:50%;background:#fff;display:block}
      i.on{background:radial-gradient(#333 0 3.500px,#fff 4px)}
    `, `<div class="cap">参数图</div>
      <div class="opt"><label><i class="on"></i>角度放坡形式</label><label><i></i>底宽放坡形式</label></div>
      <cad-drawing></cad-drawing>`);
  }
}

// Status and taskbar --------------------------------------------------------
class StatusRow extends HTMLElement {
  constructor() {
    super();
    const cells = [[148, ''], [78, '层高:2.15m'], [98, '底标高:-2.2m'], [48, '0'], [916, '名称在当前层当前构件类型下不允许重名'], [68, '577.3 FPS']];
    shadow(this, `
      :host{display:flex;height:20px;flex:none;gap:2px;background:#f0f0f0}
      div{border:1px solid #dcdcdc;background:#f4f4f4;padding-left:1px;line-height:16px;font-size:12px;white-space:nowrap;flex:none}
    `, cells.map(([w, t]) => `<div style="width:${w}px">${mix(t)}</div>`).join(''));
  }
}
const TASK = {
  win: `<path d="M0 3l7-1v5.500H0zM8 2l8-1v6.500H8zM0 8.500h7V14l-7-1zM8 8.500h8V15l-8-1z" fill="#fff"/>`,
  view: `<rect x="4" y="1" width="8" height="14" fill="none" stroke="#fff"/><path d="M2 4H0v8h2M14 4h2v8h-2" fill="none" stroke="#fff"/>`,
  wheel: `<path d="M8 8C3 8 1 6 2 3s5-3 6 0zM8 8c0-5 2-7 5-6s3 5 0 6zM8 8c5 0 7 2 6 5s-5 3-6 0zM8 8c0 5-2 7-5 6s-3-5 0-6z" fill="#e6e6e6"/>`,
  ewhite: `<path d="M3 8h10c0-4-2-6-5-6S2 5 2 9s3 5 6 5c2 0 4-1 5-3" fill="none" stroke="#e8e8e8" stroke-width="2.400"/><path d="M1 4c4-5 12-5 13-3" fill="none" stroke="#e8e8e8"/>`,
  swirl: `<circle cx="7" cy="9" r="6" fill="none" stroke="#bbb" stroke-width="1.300"/><path d="M4 9c0-3 5-4 6-1s-3 4-3 2" fill="none" stroke="#bbb" stroke-width="1.300"/><path d="M11 6c0-3 1-5 3-5s3 2 3 5l1 2h-8z" fill="#f4b020"/>`,
  edge: `<path d="M3 8h11C14 4 12 1 8 1 4 1 1 4 1 9s3 6 6 6c3 0 5-1 7-2v-3c-3 2-8 3-9-2" fill="#0a78d8"/><path d="M4.500 6c.5-2 5-2 5.500 1h-5z" fill="#000c14"/>`,
  ie: `<circle cx="8" cy="8" r="6" fill="#35a6ee"/><path d="M4 7.500h9M11 11c-2 2-5 1.500-6-1" stroke="#fff" stroke-width="2" fill="none"/><path d="M2 15c-2-2 4-13 13-14-4 1-10 5-11 11" fill="none" stroke="#f0cc30" stroke-width="1.500"/>`,
  folder: `<path d="M1 3h5l1 1h8v11H1z" fill="#f5d36e"/><path d="M5 10h6v5H5z" fill="#4faee0"/><path d="M1 6h14" stroke="#e0b040"/>`,
  gblue: `<path d="M13 3C9-1 2 2 2 8s6 8 9 6c2-1 3-3 2-5H8" fill="none" stroke="#1e90e8" stroke-width="3.400"/>`,
  egreen: `<circle cx="8" cy="8" r="7" fill="#70c040" stroke="#e8f0e0"/><path d="M4 8h8M11.500 5.500c-2-2-5-1.500-6 .5M5 11c1.500 1.500 4.500 1.500 6 .5" stroke="#fff" stroke-width="1.600" fill="none"/>`,
  note: `<rect x="1" y="1" width="14" height="14" rx="1" fill="#f49820"/><rect x="3" y="3" width="10" height="10" fill="#fbe7a8"/><path d="M4 6h6M4 8h5M4 10h6" stroke="#888"/><path d="M14 1L8 10" stroke="#b03020" stroke-width="1.600"/>`
};
class TaskBar extends HTMLElement {
  constructor() {
    super();
    const tb = (k, w, s = 28, extra = '', ml = 0) => `<div class="t ${extra}" style="width:${w}px;margin-left:${ml}px">${ico(TASK[k] || ICONS[k], s)}</div>`;
    const tray = (w, inner, st = '') => `<div class="tray" style="width:${w}px;${st}">${inner}</div>`;
    shadow(this, `
      :host{display:flex;height:40px;flex:none;background:#050f13;color:#ddd;font-size:12px;align-items:stretch}
      .start{width:48px;background:#000;display:flex;align-items:center;justify-content:center}
      .search{width:344px;background:#333;display:flex;align-items:center;color:#999;font-size:14px;padding-left:9px}
      .search u{width:21px;height:21px;border-radius:50%;border:3px solid #ddd;margin-right:5px;flex:none}
      .search span{flex:1}
      .t{flex:none;display:flex;align-items:center;justify-content:center;height:100%}
      .run{box-shadow:inset 0 -2px 0 #6fb4e8}
      .act{background:#374247;box-shadow:inset 0 -2px 0 #6fb4e8}
      .tx{flex:none;display:flex;align-items:center;justify-content:center;text-align:center;line-height:19px}
      .tray{flex:none;display:flex;align-items:center;justify-content:center}
      .clock{width:74px;text-align:center;line-height:21px;font-size:12.500px;display:flex;flex-direction:column;justify-content:center;flex:none}
      .end{flex:1;background:#020a0d;display:flex;align-items:center;padding-left:27px}
    `, `<div class="start">${ico(TASK.win, 16)}</div>
      <div class="search"><u></u><span>在这里输入你要搜索的内容</span><svg width="14" height="20" viewBox="0 0 14 20" style="margin-right:14px"><rect x="4" y="1" width="6" height="11" rx="3" fill="none" stroke="#888"/><path d="M1.500 9c0 7 11 7 11 0M7 15v4M3 19h8" fill="none" stroke="#888"/></svg></div>
      ${tb('view', 48, 20)}${tb('wheel', 50, 24)}${tb('ewhite', 53, 24)}${tb('swirl', 48, 26)}${tb('edge', 56, 26)}${tb('ie', 44, 26)}${tb('folder', 54, 24)}
      ${tb('gblue', 39, 26, 'run', 2)}${tb('egreen', 39, 26, 'run', 9)}${tb('app', 47, 24, 'act', 5)}${tb('note', 39, 26, 'run', 5)}
      <div class="tx" style="width:58px;font-size:12.500px">链接</div>
      <div class="tx" style="width:56px">4%<br>CPU使用</div>
      ${tray(24, `<svg width="12" height="8" viewBox="0 0 12 8"><path d="M1 7l5-5 5 5" fill="none" stroke="#fff" stroke-width="1.200"/></svg>`, 'margin-left:9px')}
      ${tray(26, `<svg width="16" height="12" viewBox="0 0 16 12"><rect x="1" y="3" width="14" height="8" fill="none" stroke="#fff"/><rect x="3" y="5" width="9" height="4" fill="#fff"/><path d="M3 3V0M7 3V0" stroke="#fff"/></svg>`)}
      ${tray(24, `<svg width="16" height="14" viewBox="0 0 16 14"><path d="M1 13a12 12 0 0 1 12-12M4 13a9 9 0 0 1 9-9M7 13a6 6 0 0 1 6-6" fill="none" stroke="#ccc" stroke-dasharray="2 1"/><circle cx="11" cy="12" r="1.500" fill="#fff"/></svg>`)}
      ${tray(21, `<svg width="16" height="14" viewBox="0 0 16 14"><path d="M1 5h3l4-4v12l-4-4H1z" fill="none" stroke="#fff"/><path d="M10 4c2 2 2 4 0 6M13 2c3 3 3 7 0 10" fill="none" stroke="#999"/></svg>`)}
      ${tray(34, `<svg width="23" height="16" viewBox="0 0 23 16"><rect x=".5" y=".5" width="22" height="15" fill="none" stroke="#eee"/><path d="M3 4h17M3 7h17M6 11h11" stroke="#eee" stroke-dasharray="2 1"/></svg>`)}
      ${tray(24, '中', 'font-size:13px;color:#fff')}
      ${tray(32, `<svg width="16" height="18" viewBox="0 0 16 18"><rect x="1" y="1" width="14" height="16" rx="3" transform="rotate(-6 8 9)" fill="#ee4a1a"/><text x="8" y="14" text-anchor="middle" font-family="Liberation Sans" font-weight="700" font-size="14" fill="#fff">S</text></svg>`)}
      <div class="clock"><div>16:11</div><div>2018/6/25</div></div>
      <div class="end"><svg width="16" height="18" viewBox="0 0 16 18" style="margin-left:-14px"><path d="M.5.500h15v12h-5l-2.500 3-2.500-3h-5z" fill="none" stroke="#fff"/></svg></div>`);
  }
}

class GdApp extends HTMLElement {
  constructor() {
    super();
    shadow(this, `
      :host{display:flex;flex-direction:column;height:768px;width:1366px;position:relative;overflow:hidden;background:#f0f0f0}
      .main{flex:1;min-height:0;display:flex;padding-top:2px;margin-bottom:2px;gap:7px}
      .right{flex:1;min-width:0;display:flex;flex-direction:column}
      .panes{flex:1;min-height:0;display:flex;padding-top:3px}
      .ring{position:absolute;left:440px;top:208px;pointer-events:none}
    `, `<title-bar></title-bar><menu-bar></menu-bar><main-toolbar></main-toolbar>
      <div class="main">
        <nav-panel></nav-panel>
        <div class="right"><list-toolbar></list-toolbar>
          <div class="panes"><comp-tree></comp-tree><prop-sheet></prop-sheet></div>
        </div>
      </div>
      <status-row></status-row><task-bar></task-bar>
      <param-dialog></param-dialog><ime-bar></ime-bar>
      <svg class="ring" width="246" height="214" viewBox="0 0 246 214"><ellipse cx="123" cy="107" rx="115" ry="99" fill="none" stroke="#ff0000" stroke-width="7"/></svg>`);
  }
}

customElements.define('tool-strip', ToolStrip);
customElements.define('tb-item', TbItem);
customElements.define('tb-sep', TbSep);
customElements.define('tb-more', TbMore);
customElements.define('title-bar', TitleBar);
customElements.define('ime-bar', ImeBar);
customElements.define('menu-bar', MenuBar);
customElements.define('main-toolbar', MainToolbar);
customElements.define('list-toolbar', ListToolbar);
customElements.define('scroll-rail', ScrollRail);
customElements.define('nav-panel', NavPanel);
customElements.define('comp-tree', CompTree);
customElements.define('prop-sheet', PropSheet);
customElements.define('cad-drawing', CadDrawing);
customElements.define('param-dialog', ParamDialog);
customElements.define('status-row', StatusRow);
customElements.define('task-bar', TaskBar);
customElements.define('gd-app', GdApp);
</script>
</body>
</html>
